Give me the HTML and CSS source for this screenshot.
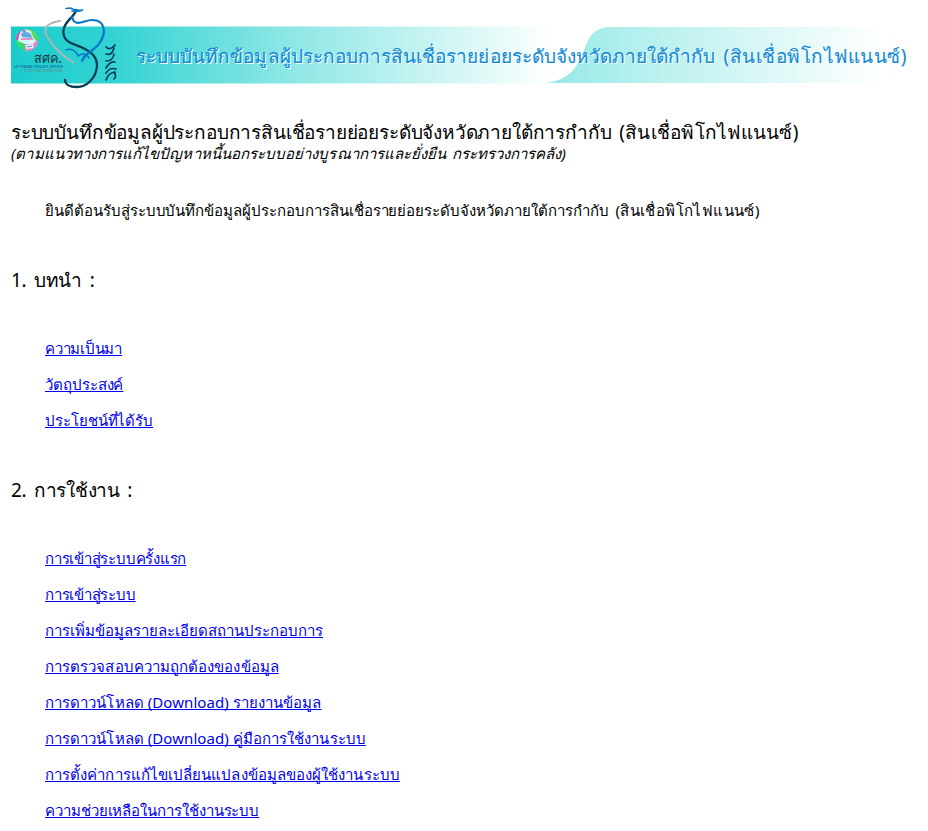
FILE: index.html
```html
<!DOCTYPE html>
<html lang="th">
<head>
<meta charset="utf-8">
<title>ระบบบันทึกข้อมูลผู้ประกอบการสินเชื่อรายย่อย</title>
<link rel="stylesheet" href="styles.css">
</head>
<body>
<header>
<svg class="banner" viewBox="0 0 928 96" width="928" height="96">
  <defs>
    <linearGradient id="base" gradientUnits="userSpaceOnUse" x1="11" y1="0" x2="550" y2="0"><stop offset="0" stop-color="#1acccc"/><stop offset=".19" stop-color="#34d3d3"/><stop offset=".5" stop-color="#89e6e4"/><stop offset=".9" stop-color="#e5faf9"/><stop offset="1" stop-color="#fff"/></linearGradient>
    <linearGradient id="wave" gradientUnits="userSpaceOnUse" x1="545" y1="0" x2="885" y2="0"><stop offset="0" stop-color="#96e8e6"/><stop offset=".25" stop-color="#b1efed"/><stop offset="1" stop-color="#fff"/></linearGradient>
    <clipPath id="ball"><circle cx="27" cy="40" r="11"/></clipPath>
  </defs>
  <path d="M11 26.500H550V83.500H11Z" fill="url(#base)"/>
  <path d="M545 83C568 81 577 68 583 53C588 39 592 27 611 27H890V83Z" fill="url(#wave)"/>
  <g clip-path="url(#ball)">
    <path d="M15 28H27V40H15Z" fill="#ec4baa"/><path d="M27 28H40V41H27Z" fill="#52df58"/><path d="M15 40H25V52H15Z" fill="#35dd70"/><path d="M25 41H40V52H25Z" fill="#f084cc"/>
    <path d="M19 36L21 31L25 29L31 31L33 37L36 41L33 44L25 44L18 41Z" fill="#d7f4ff"/>
    <path d="M21 34Q26 30 31 34L32 38L22 37Z" fill="#5fa9e2"/><path d="M21 39L33 39" stroke="#e92f94" stroke-width="1.200"/><path d="M26 47L33 46" stroke="#f0f8ff" stroke-width="4"/><path d="M27 47L32 46" stroke="#2c86cf" stroke-width="1"/><circle cx="24" cy="31" r="2" fill="#7b9cdb"/>
  </g>
  <g fill="none" stroke-linecap="round">
    <path d="M60 21C44 23 42 31 50 41C56 50 64 57 73 62" stroke="#b3b3b3" stroke-width="2"/>
    <path d="M76 10C75 17 65 20 63.500 30C62 42 73 44 81 47C92 52 97 57 97 66C96 78 87 87 77 87C69 87 65 84 65 80" stroke="#063c58" stroke-width="2.300"/>
    <path d="M66 8.500L70 8Q76 11 83 10Q78 12 72 11" stroke="#0877c8" stroke-width="1.600"/>
    <path d="M72 17C75 28 84 20 92 20C106 20 107 34 98 45C92 52 84 54 82 61" stroke="#0877c8" stroke-width="2.200"/>
    <path d="M66 50Q74 47 78 56Q85 51 89 58" stroke="#0877c8" stroke-width="1.500"/>
    <path d="M106 47Q110 51 115 45M106 54Q112 56 114 48M106 61Q113 61 114 54M106 68Q110 61 115 62M106 73Q110 67 116 69M106 80Q108 73 115 72M114 72Q117 76 114 79" stroke="#083e59" stroke-width="1.700"/>
  </g>
  <text class="office" x="34" y="63" textLength="28" lengthAdjust="spacingAndGlyphs">สศค.</text>
  <text class="office-en" x="20" y="68" textLength="43" lengthAdjust="spacingAndGlyphs">FISCAL POLICY OFFICE</text>
  <path d="M14 68L17 65M16 68L19 65" stroke="#126fae"/>
  <text class="office-th" x="24" y="72" textLength="39" lengthAdjust="spacingAndGlyphs">สำนักงานเศรษฐกิจการคลัง</text>
</svg>
<div class="title"><span>ระบบบันทึกข้อมูลผู้ประกอบการสินเชื่อรายย่อยระดับจังหวัดภายใต้กำกับ</span> <span class="paren">(สินเชื่อพิโกไฟแนนซ์)</span></div>
</header>
<main>
<h1>ระบบบันทึกข้อมูลผู้ประกอบการสินเชื่อรายย่อยระดับจังหวัดภายใต้การกำกับ <span class="paren">(สินเชื่อพิโกไฟแนนซ์)</span></h1>
<p class="subtitle">(ตามแนวทางการแก้ไขปัญหาหนี้นอกระบบอย่างบูรณาการและยั่งยืน กระทรวงการคลัง)</p>
<p class="welcome">ยินดีต้อนรับสู่ระบบบันทึกข้อมูลผู้ประกอบการสินเชื่อรายย่อยระดับจังหวัดภายใต้การกำกับ <span class="paren">(สินเชื่อพิโกไฟแนนซ์)</span></p>
<section>
<h2>1. บทนำ :</h2>
<ul>
<li class="tight"><a href="#">ความเป็นมา</a></li>
<li class="snug"><a href="#">วัตถุประสงค์</a></li>
<li class="snug"><a href="#">ประโยชน์ที่ได้รับ</a></li>
</ul>
</section>
<section>
<h2>2. การใช้งาน :</h2>
<ul>
<li class="tight"><a href="#">การเข้าสู่ระบบครั้งแรก</a></li>
<li class="tight"><a href="#">การเข้าสู่ระบบ</a></li>
<li><a href="#">การเพิ่มข้อมูลรายละเอียดสถานประกอบการ</a></li>
<li class="loose"><a href="#">การตรวจสอบความถูกต้องของข้อมูล</a></li>
<li class="loose"><a href="#">การดาวน์โหลด (Download) รายงานข้อมูล</a></li>
<li class="loose"><a href="#">การดาวน์โหลด (Download) คู่มือการใช้งานระบบ</a></li>
<li class="loose"><a href="#">การตั้งค่าการแก้ไขเปลี่ยนแปลงข้อมูลของผู้ใช้งานระบบ</a></li>
<li class="snug"><a href="#">ความช่วยเหลือในการใช้งานระบบ</a></li>
</ul>
</section>
</main>
</body>
</html>
```
FILE: styles.css
```css
body { margin: 0; overflow: hidden; background: #fff; color: #000; font-family: Tahoma, "Noto Sans", sans-serif; font-size: 15px; }
header { position: relative; }
.banner { display: block; }
.title { position: absolute; left: 136px; top: 40px; line-height: 32px; white-space: nowrap; font-size: 19px; letter-spacing: .05px; word-spacing: 3px; color: #168bd4; -webkit-text-stroke: .1px #168bd4; text-shadow: 1px 1px 0 #fff; }
.title .paren { letter-spacing: .5px; }
.office { font-size: 14px; fill: #1b3544; }
.office-en { font-size: 4px; font-weight: bold; fill: #176fa7; }
.office-th { font-size: 4px; fill: #668b91; }
main { padding: 24px 11px 0; white-space: nowrap; }
h1, h2 { margin: 0; font-size: 19px; font-weight: normal; line-height: 24px; }
h1 { letter-spacing: -.18px; word-spacing: 3px; }
h1 .paren { letter-spacing: .25px; }
p { margin: 0; line-height: 18px; }
.subtitle { font-style: italic; letter-spacing: .06px; word-spacing: 1.5px; }
.welcome { margin: 39px 0 49px 34px; letter-spacing: -.04px; word-spacing: 3px; }
.welcome .paren { letter-spacing: .4px; }
h2 { letter-spacing: -.3px; word-spacing: 3px; }
ul { list-style: none; margin: 38px 0 40px; padding: 0 0 0 34px; }
li { height: 36px; line-height: 36px; }
.tight { letter-spacing: -.22px; }
.snug { letter-spacing: -.07px; }
.loose { letter-spacing: .07px; }
a { color: #00e; text-decoration: underline; text-decoration-skip-ink: none; }
```
